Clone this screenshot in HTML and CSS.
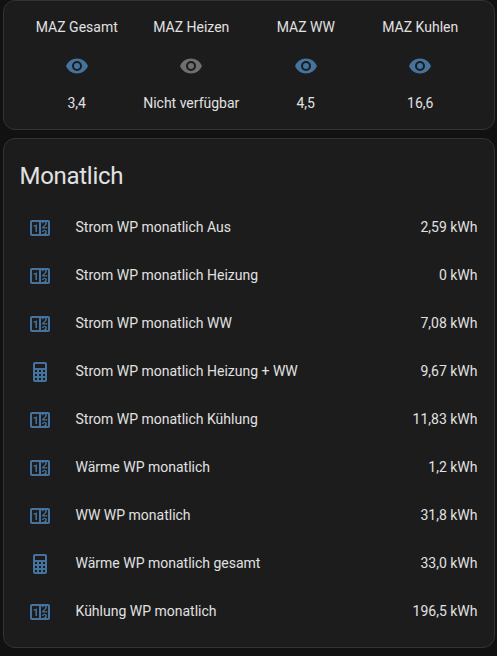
FILE: index.html
```html
<!DOCTYPE html>
<html lang="de">
<head>
  <meta charset="UTF-8">
  <meta name="viewport" content="width=device-width, initial-scale=1.0">
  <title>Wärmepumpe</title>
  <link rel="stylesheet" href="styles.css">
</head>
<body>
  <svg class="sprite">
    <symbol id="eye" viewBox="0 0 24 24">
      <path d="M12,9A3,3 0 0,0 9,12A3,3 0 0,0 12,15A3,3 0 0,0 15,12A3,3 0 0,0 12,9M12,17A5,5 0 0,1 7,12A5,5 0 0,1 12,7A5,5 0 0,1 17,12A5,5 0 0,1 12,17M12,4.5C7,4.5 2.73,7.61 1,12C2.73,16.39 7,19.5 12,19.5C17,19.5 21.27,16.39 23,12C21.27,7.61 17,4.5 12,4.5Z"/>
    </symbol>
    <symbol id="counter" viewBox="0 0 24 24">
      <path d="M4,4H20A2,2 0 0,1 22,6V18A2,2 0 0,1 20,20H4A2,2 0 0,1 2,18V6A2,2 0 0,1 4,4M4,6V18H11V6H4M20,18V6H18.76C19,6.54 18.95,7.07 18.95,7.13C18.88,7.8 18.41,8.5 18.24,8.75L15.91,11.3L19.23,11.28L19.24,12.5L14.04,12.47L14,11.47C14,11.47 17.05,8.24 17.2,7.95C17.34,7.67 17.91,6 16.5,6C15.27,6.05 15.41,7.3 15.41,7.3L13.87,7.31C13.87,7.31 13.88,6.65 14.25,6H13V18H15.58L15.57,17.14L16.54,17.13C16.54,17.13 17.45,16.97 17.46,16.08C17.5,15.08 16.65,15.08 16.5,15.08C16.37,15.08 15.43,15.13 15.43,15.95H13.91C13.91,15.95 13.95,13.89 16.5,13.89C19.1,13.89 18.96,15.91 18.96,15.91C18.96,15.91 19,17.16 17.85,17.63L18.37,18H20M8.92,16H7.42V10.2L5.62,10.76V9.53L8.76,8.41H8.92V16Z"/>
    </symbol>
    <symbol id="calculator" viewBox="0 0 24 24">
      <path d="M7,2H17A2,2 0 0,1 19,4V20A2,2 0 0,1 17,22H7A2,2 0 0,1 5,20V4A2,2 0 0,1 7,2M7,4V8H17V4H7M7,10V12H9V10H7M11,10V12H13V10H11M15,10V12H17V10H15M7,14V16H9V14H7M11,14V16H13V14H11M15,14V16H17V14H15M7,18V20H9V18H7M11,18V20H13V18H11M15,18V20H17V18H15Z"/>
    </symbol>
  </svg>

  <div class="card glance">
    <div class="entity">
      <div class="name">MAZ Gesamt</div>
      <svg class="icon"><use href="#eye"/></svg>
      <div>3,4</div>
    </div>
    <div class="entity">
      <div class="name">MAZ Heizen</div>
      <svg class="icon unavailable"><use href="#eye"/></svg>
      <div>Nicht verfügbar</div>
    </div>
    <div class="entity">
      <div class="name">MAZ WW</div>
      <svg class="icon"><use href="#eye"/></svg>
      <div>4,5</div>
    </div>
    <div class="entity">
      <div class="name">MAZ Kuhlen</div>
      <svg class="icon"><use href="#eye"/></svg>
      <div>16,6</div>
    </div>
  </div>

  <div class="card entities">
    <h1>Monatlich</h1>
    <ul>
      <li><svg class="icon"><use href="#counter"/></svg><span>Strom WP monatlich Aus</span><span class="state">2,59 kWh</span></li>
      <li><svg class="icon"><use href="#counter"/></svg><span>Strom WP monatlich Heizung</span><span class="state">0 kWh</span></li>
      <li><svg class="icon"><use href="#counter"/></svg><span>Strom WP monatlich WW</span><span class="state">7,08 kWh</span></li>
      <li><svg class="icon"><use href="#calculator"/></svg><span>Strom WP monatlich Heizung + WW</span><span class="state">9,67 kWh</span></li>
      <li><svg class="icon"><use href="#counter"/></svg><span>Strom WP monatlich Kühlung</span><span class="state">11,83 kWh</span></li>
      <li><svg class="icon"><use href="#counter"/></svg><span>Wärme WP monatlich</span><span class="state">1,2 kWh</span></li>
      <li><svg class="icon"><use href="#counter"/></svg><span>WW WP monatlich</span><span class="state">31,8 kWh</span></li>
      <li><svg class="icon"><use href="#calculator"/></svg><span>Wärme WP monatlich gesamt</span><span class="state">33,0 kWh</span></li>
      <li><svg class="icon"><use href="#counter"/></svg><span>Kühlung WP monatlich</span><span class="state">196,5 kWh</span></li>
    </ul>
  </div>
</body>
</html>
```
FILE: styles.css
```css
* {
  box-sizing: border-box;
}
body {
  margin: 0;
  padding: 0 2.5px 8px;
  background: #111111;
  color: #e1e1e1;
  font-family: Roboto, sans-serif;
  font-size: 14px;
  line-height: 20px;
}
.sprite {
  display: none;
}
.card {
  background: #1c1c1c;
  border: 1px solid #333333;
  border-radius: 12px;
}
.icon {
  width: 24px;
  height: 24px;
  fill: #44739e;
  flex-shrink: 0;
}
.icon.unavailable {
  fill: #6f6f6f;
}
.glance {
  display: flex;
  height: 130px;
  padding: 16px;
  margin-bottom: 8px;
}
.entity {
  flex: 1 1 0;
  min-width: 0;
  display: flex;
  flex-direction: column;
  align-items: center;
  white-space: nowrap;
}
.entity .icon {
  margin: 17px 0 15px;
}
.entities {
  height: 510px;
  padding: 0 16px 16px;
}
h1 {
  margin: 0;
  padding: 13px 0 8px;
  font-size: 24px;
  font-weight: 400;
  line-height: 48px;
  letter-spacing: -0.012em;
}
ul {
  list-style: none;
  margin: 0;
  padding: 0;
}
li {
  display: flex;
  align-items: center;
  height: 40px;
  padding-left: 8px;
  margin-bottom: 8px;
}
li .icon {
  margin-right: 24px;
}
li span {
  padding-bottom: 2px;
}
.state {
  margin-left: auto;
}
```
